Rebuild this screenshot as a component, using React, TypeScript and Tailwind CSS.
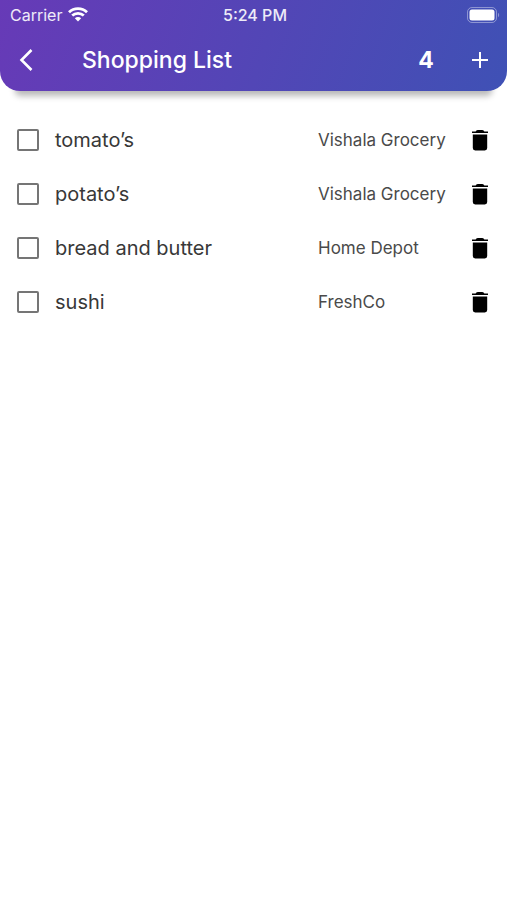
import { useState } from 'react';

type Item = { id: number; name: string; store: string };

const initialItems: Item[] = [
  { id: 1, name: 'tomato’s', store: 'Vishala Grocery' },
  { id: 2, name: 'potato’s', store: 'Vishala Grocery' },
  { id: 3, name: 'bread and butter', store: 'Home Depot' },
  { id: 4, name: 'sushi', store: 'FreshCo' },
];

function WifiIcon() {
  return (
    <svg viewBox="0 0 20 15" className="h-[15px] w-5" fill="none" stroke="white" strokeWidth="2.8" aria-hidden="true">
      <path d="M1 5.2C6 .3 14 .3 19 5.2" />
      <path d="M4.2 8.6c3.3-3.1 8.3-3.1 11.6 0" />
      <path d="M6.8 11.3c1.8-1.7 4.6-1.7 6.4 0L10 14.6z" fill="white" stroke="none" />
    </svg>
  );
}

function BatteryIcon() {
  return (
    <svg viewBox="0 0 33 16" className="h-4 w-[33px]" aria-hidden="true">
      <rect x=".5" y=".5" width="29" height="15" rx="4.5" fill="none" stroke="white" strokeOpacity=".4" />
      <rect x="2.5" y="2.5" width="25" height="11" rx="2.5" fill="white" />
      <path d="M31 5.8c1.6.7 1.6 3.7 0 4.4z" fill="white" fillOpacity=".4" />
    </svg>
  );
}

function StatusBar() {
  return (
    <div className="grid h-[29px] grid-cols-3 items-center pr-[7px] pl-[10px] text-base leading-5 text-white/90">
      <div className="flex items-center gap-[6px]">
        <span>Carrier</span>
        <WifiIcon />
      </div>
      <span className="text-center font-medium">5:24 PM</span>
      <div className="flex justify-end">
        <BatteryIcon />
      </div>
    </div>
  );
}

function Header({ count }: { count: number }) {
  return (
    <header className="rounded-b-[20px] bg-linear-[110deg] from-[#673ab7] to-[#3f51b5] text-white shadow-[0_20px_6px_-15px_rgba(0,0,0,0.28)]">
      <StatusBar />
      <div className="flex h-[62px] items-center pr-[15px] pl-[14px]">
        <button type="button" aria-label="Back" className="flex size-6 items-center justify-center">
          <svg viewBox="0 0 24 24" className="size-6" fill="none" stroke="currentColor" strokeWidth="2.6" aria-hidden="true">
            <path d="M17.5 2 7.5 12l10 10" />
          </svg>
        </button>
        <h1 className="ml-11 flex-1 text-[23px] leading-7 font-medium">Shopping List</h1>
        <span className="w-4 text-center text-[23px] leading-7 font-bold">{count}</span>
        <button type="button" aria-label="Add item" className="ml-[34px] flex size-6 items-center justify-center">
          <svg viewBox="0 0 24 24" className="size-6" stroke="currentColor" strokeWidth="2" aria-hidden="true">
            <path d="M12 4v16M4 12h16" />
          </svg>
        </button>
      </div>
    </header>
  );
}

function TrashIcon() {
  return (
    <svg viewBox="0 0 18 22" className="h-[22px] w-[18px]" fill="black" aria-hidden="true">
      <path d="M1 4V2.4h3.6Q5.6 1 7 1h4q1.400 0 2.400 1.400H17V4z" />
      <path d="M1.800 5.400h14.400V19a2.400 2.400 0 0 1-2.400 2.400H4.200A2.400 2.400 0 0 1 1.800 19z" />
    </svg>
  );
}

export default function App() {
  const [items, setItems] = useState(initialItems);

  return (
    <div className="min-h-screen bg-white font-['Inter','Liberation_Sans',sans-serif]">
      <Header count={items.length} />
      <main className="pt-[22px]">
        <ul>
          {items.map((item) => (
            <li key={item.id} className="flex h-[54px] items-center pr-[18px] pl-[17px]">
              <label className="flex flex-1 items-center gap-4 text-xl leading-6 text-[#383838]">
                <input
                  type="checkbox"
                  className="size-[22px] appearance-none rounded-[2px] border-2 border-[#757575] checked:bg-[#673ab7]"
                />
                {item.name}
              </label>
              <span className="w-[153px] text-[17px] leading-6 text-[#4a4a4a]">{item.store}</span>
              <button
                type="button"
                aria-label={`Delete ${item.name}`}
                onClick={() => setItems(items.filter((other) => other.id !== item.id))}
              >
                <TrashIcon />
              </button>
            </li>
          ))}
        </ul>
      </main>
    </div>
  );
}
